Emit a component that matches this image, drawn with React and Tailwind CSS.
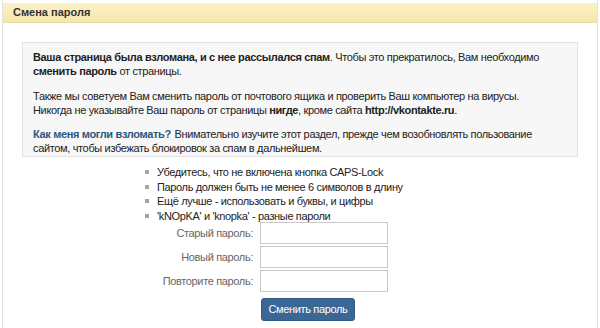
const FONT = "font-['Liberation_Sans',Tahoma,sans-serif]"

const TIPS = [
  'Убедитесь, что не включена кнопка CAPS-Lock',
  'Пароль должен быть не менее 6 символов в длину',
  'Ещё лучше - использовать и буквы, и цифры',
  "'kNOpKA' и 'knopka' - разные пароли",
]

const FIELDS = ['Старый пароль:', 'Новый пароль:', 'Повторите пароль:']

export default function App() {
  return (
    <div className={`w-[600px] h-[328px] bg-white overflow-hidden text-[11px] tracking-[-0.35px] text-[#222] ${FONT}`}>
      <div className="ml-[2px] w-[596px] h-full border-l border-r border-[#e3e3e3] pt-[3px]">

        {/* Header */}
        <div className="h-[20px] flex items-center px-[10px] bg-gradient-to-b from-[#fcf2c8] to-[#f4e6ad] border-b border-[#ecdca0]">
          <span className="font-bold text-[#333] tracking-normal">Смена пароля</span>
        </div>

        {/* Warning box */}
        <div className="mt-[19px] mx-[19px] bg-[#f7f7f7] border border-[#e2e2e2] px-[10px] pt-[7px] pb-[1px] leading-[14px]">
          <p>
            <b>Ваша страница была взломана, и с нее рассылался спам</b>. Чтобы это прекратилось, Вам необходимо{' '}
            <b>сменить пароль</b> от страницы.
          </p>
          <p className="mt-[11px]">
            Также мы советуем Вам сменить пароль от почтового ящика и проверить Ваш компьютер на вирусы.<br />
            Никогда не указывайте Ваш пароль от страницы <b>нигде</b>, кроме сайта <b>http://vkontakte.ru</b>.
          </p>
          <p className="mt-[10px]">
            <b className="text-[#2b587a] mr-[1px]">Как меня могли взломать?</b> Внимательно изучите этот раздел, прежде чем возобновлять пользование сайтом, чтобы избежать блокировок за спам в дальнейшем.
          </p>
        </div>

        {/* Tips */}
        <ul className="mt-[8px] ml-[142px] flex flex-col">
          {TIPS.map(t => (
            <li key={t} className="h-[14.5px] flex items-center gap-[8px]">
              <span className="w-[4px] h-[4px] bg-[#a5a5a5]" />
              <span>{t}</span>
            </li>
          ))}
        </ul>

        {/* Form */}
        <div className="mt-[-1px] flex flex-col gap-[2px]">
          {FIELDS.map(f => (
            <div key={f} className="flex items-center">
              <label className="w-[257px] pr-[7px] text-right text-[#666]">{f}</label>
              <input type="password" className="w-[128px] h-[22px] bg-white border border-[#c9c9c9] outline-none" />
            </div>
          ))}
          <div className="flex mt-[4px] pl-[258px]">
            <button className="h-[23px] w-[94px] rounded-[3px] bg-[#3b6795] border border-[#2f5a85] text-white text-[11px]">
              Сменить пароль
            </button>
          </div>
        </div>

      </div>
    </div>
  )
}
